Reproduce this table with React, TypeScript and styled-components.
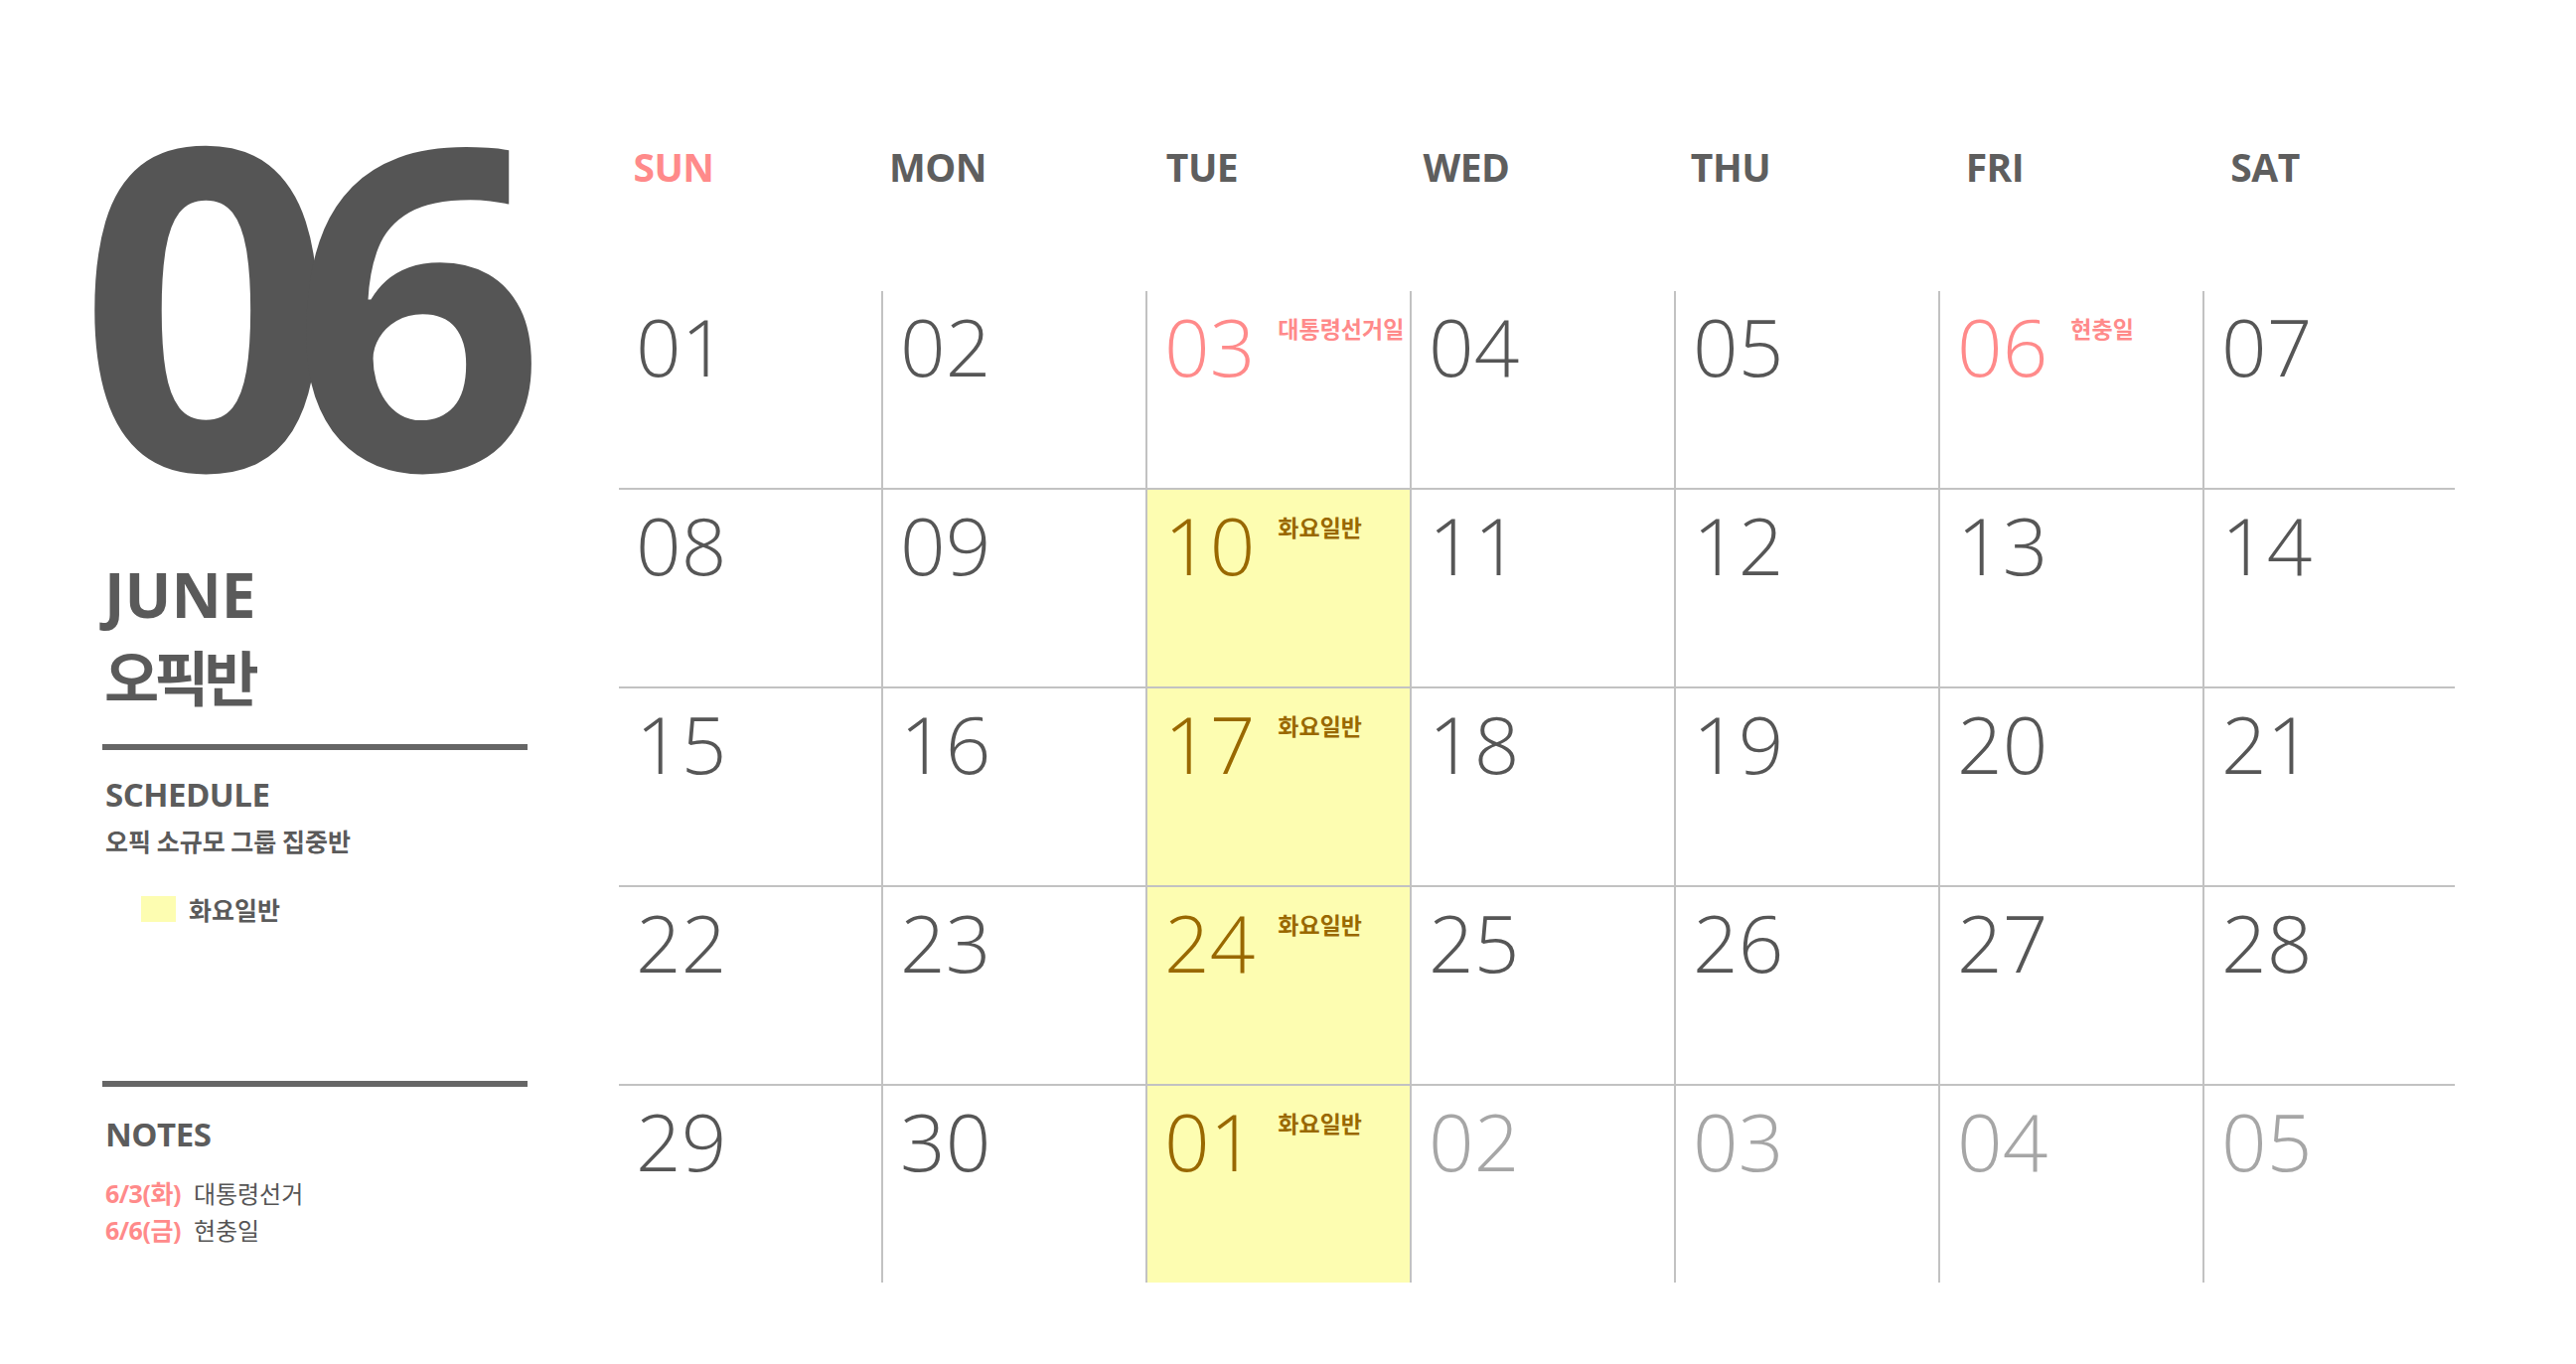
import React from 'react';
import styled, { createGlobalStyle } from 'styled-components';

const GlobalStyle = createGlobalStyle`
  html, body {
    margin: 0;
    padding: 0;
    background: #fff;
  }
  body {
    font-family: "Open Sans", "Noto Sans CJK KR", sans-serif;
    color: #555;
  }
`;

const Page = styled.div`
  display: flex;
  width: 2593px;
  height: 1373px;
  box-sizing: border-box;
  padding-left: 103px;
  overflow: hidden;
`;

const Side = styled.aside`
  width: 428px;
  display: flex;
  flex-direction: column;
  padding-top: 114px;
`;

const BigMonth = styled.div`
  height: 370px;
  white-space: nowrap;
  font-family: "Open Sans", sans-serif;
  font-weight: 700;
  font-size: 450px;
  line-height: 370px;
  letter-spacing: -44px;
  margin: 0 -40px 0 -24px;
  color: #555;
`;

const TitleEn = styled.div`
  margin-top: 83px;
  padding-left: 2px;
  font-family: "Open Sans", sans-serif;
  font-weight: 700;
  font-size: 62px;
  line-height: 62px;
  color: #5a5a5a;
`;

const TitleKo = styled.div`
  margin-top: 21px;
  padding-left: 2px;
  font-family: "Noto Sans CJK KR", sans-serif;
  font-weight: 700;
  font-size: 60px;
  line-height: 60px;
  letter-spacing: -5px;
  color: #5a5a5a;
`;

const Divider = styled.div<{ $gap: number }>`
  margin-top: ${({ $gap }) => $gap}px;
  height: 6px;
  background: #666;
`;

const SectionTitle = styled.div<{ $gap: number }>`
  margin-top: ${({ $gap }) => $gap}px;
  padding-left: 3px;
  font-family: "Open Sans", sans-serif;
  font-weight: 700;
  font-size: 33px;
  line-height: 33px;
  letter-spacing: -0.5px;
  color: #5c5c5c;
`;

const Subtitle = styled.div`
  margin-top: 18px;
  padding-left: 3px;
  font-family: "Noto Sans CJK KR", sans-serif;
  font-weight: 700;
  font-size: 25px;
  line-height: 25px;
  color: #5a5a5a;
`;

const Legend = styled.div`
  margin-top: 43px;
  padding-left: 39px;
  display: flex;
  align-items: center;
  gap: 13px;
`;

const Swatch = styled.span`
  width: 35px;
  height: 26px;
  background: #fdfdb1;
`;

const LegendLabel = styled.span`
  font-family: "Noto Sans CJK KR", sans-serif;
  font-weight: 700;
  font-size: 25px;
  line-height: 26px;
  color: #5a5a5a;
`;

const NotesList = styled.div`
  margin-top: 24px;
  padding-left: 3px;
  display: flex;
  flex-direction: column;
`;

const NoteRow = styled.div`
  display: flex;
  align-items: baseline;
  gap: 13px;
  height: 37px;
  line-height: 37px;
`;

const NoteDate = styled.span`
  font-family: "Open Sans", "Noto Sans CJK KR", sans-serif;
  font-weight: 700;
  font-size: 25px;
  color: #ff8a8a;
  letter-spacing: -0.5px;
`;

const NoteText = styled.span`
  font-family: "Noto Sans CJK KR", sans-serif;
  font-weight: 400;
  font-size: 24px;
  color: #555;
`;

const Calendar = styled.main`
  margin-left: 92px;
  padding-top: 148px;
  display: flex;
  flex-direction: column;
`;

const columns = `repeat(6, 264px) 252px`;

const WeekHeader = styled.div`
  display: grid;
  grid-template-columns: ${columns};
  column-gap: 2px;
`;

const DayName = styled.div<{ $sunday?: boolean; $shift?: number }>`
  width: 110px;
  margin-left: ${({ $shift }) => $shift ?? 0}px;
  text-align: center;
  font-family: "Open Sans", sans-serif;
  font-weight: 700;
  font-size: 39px;
  line-height: 39px;
  letter-spacing: -0.5px;
  color: ${({ $sunday }) => ($sunday ? '#ff8a8a' : '#5e5e5e')};
`;

const Grid = styled.div`
  margin-top: 106px;
  display: grid;
  grid-template-columns: ${columns};
  grid-auto-rows: 198px;
  gap: 2px;
  background: #c2c2c2;
`;

const Cell = styled.div<{ $highlight?: boolean }>`
  display: flex;
  align-items: flex-start;
  gap: 23px;
  padding: 15px 0 0 17px;
  background: ${({ $highlight }) => ($highlight ? '#fdfdb1' : '#fff')};
`;

type Tone = 'normal' | 'holiday' | 'class' | 'muted';

const toneColor: Record<Tone, string> = {
  normal: '#565656',
  holiday: '#ff8a8a',
  class: '#996800',
  muted: '#a6a6a6',
};

const DayNum = styled.span<{ $tone: Tone }>`
  font-family: "Open Sans", sans-serif;
  font-weight: 300;
  font-size: 80px;
  line-height: 80px;
  color: ${({ $tone }) => toneColor[$tone]};
`;

const Tag = styled.span<{ $tone: Tone }>`
  margin-top: 11px;
  font-family: "Noto Sans CJK KR", sans-serif;
  font-weight: 700;
  font-size: 23px;
  line-height: 23px;
  white-space: nowrap;
  color: ${({ $tone }) => toneColor[$tone]};
`;

type Day = { n: string; tone: Tone; tag?: string; hl?: boolean };

const dayNames = ['SUN', 'MON', 'TUE', 'WED', 'THU', 'FRI', 'SAT'];

const plain = (n: string): Day => ({ n, tone: 'normal' });
const muted = (n: string): Day => ({ n, tone: 'muted' });
const tuesday = (n: string): Day => ({ n, tone: 'class', tag: '화요일반', hl: true });

const days: Day[] = [
  plain('01'), plain('02'), { n: '03', tone: 'holiday', tag: '대통령선거일' }, plain('04'), plain('05'), { n: '06', tone: 'holiday', tag: '현충일' }, plain('07'),
  plain('08'), plain('09'), tuesday('10'), plain('11'), plain('12'), plain('13'), plain('14'),
  plain('15'), plain('16'), tuesday('17'), plain('18'), plain('19'), plain('20'), plain('21'),
  plain('22'), plain('23'), tuesday('24'), plain('25'), plain('26'), plain('27'), plain('28'),
  plain('29'), plain('30'), tuesday('01'), muted('02'), muted('03'), muted('04'), muted('05'),
];

const notes = [
  { date: '6/3(화)', text: '대통령선거' },
  { date: '6/6(금)', text: '현충일' },
];

const App = () => (
  <>
    <GlobalStyle />
    <Page>
      <Side>
        <BigMonth>06</BigMonth>
        <TitleEn>JUNE</TitleEn>
        <TitleKo>오픽반</TitleKo>
        <Divider $gap={39} />
        <SectionTitle $gap={28}>SCHEDULE</SectionTitle>
        <Subtitle>오픽 소규모 그룹 집중반</Subtitle>
        <Legend>
          <Swatch />
          <LegendLabel>화요일반</LegendLabel>
        </Legend>
        <Divider $gap={160} />
        <SectionTitle $gap={31}>NOTES</SectionTitle>
        <NotesList>
          {notes.map(note => (
            <NoteRow key={note.date}>
              <NoteDate>{note.date}</NoteDate>
              <NoteText>{note.text}</NoteText>
            </NoteRow>
          ))}
        </NotesList>
      </Side>

      <Calendar>
        <WeekHeader>
          {dayNames.map(name => (
            <DayName key={name} $sunday={name === 'SUN'} $shift={name === 'SAT' ? 6 : 0}>
              {name}
            </DayName>
          ))}
        </WeekHeader>
        <Grid>
          {days.map((day, i) => (
            <Cell key={i} $highlight={day.hl}>
              <DayNum $tone={day.tone}>{day.n}</DayNum>
              {day.tag && <Tag $tone={day.tone}>{day.tag}</Tag>}
            </Cell>
          ))}
        </Grid>
      </Calendar>
    </Page>
  </>
);

export default App;
